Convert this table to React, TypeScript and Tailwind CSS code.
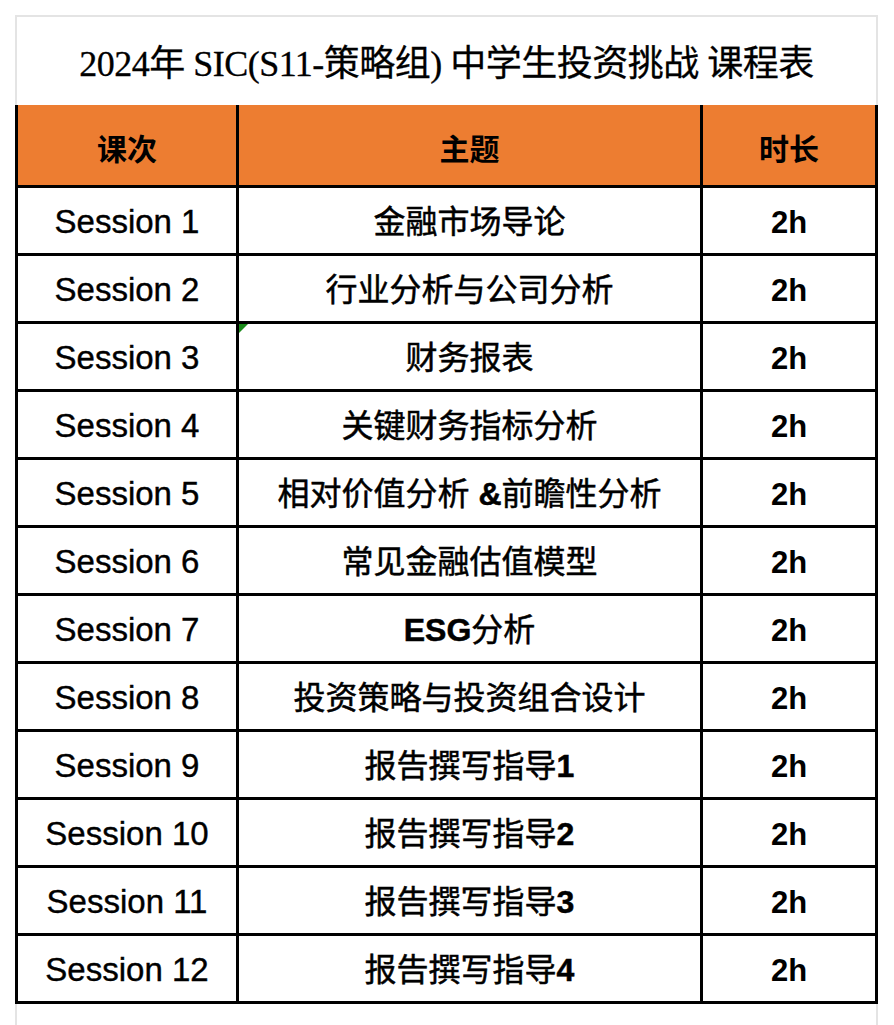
const sessions: { topic: React.ReactNode }[] = [
  { topic: "金融市场导论" },
  { topic: "行业分析与公司分析" },
  { topic: "财务报表" },
  { topic: "关键财务指标分析" },
  {
    topic: (
      <>
        相对价值分析 <b className="font-bold">&amp;</b>前瞻性分析
      </>
    ),
  },
  { topic: "常见金融估值模型" },
  {
    topic: (
      <>
        <b className="font-bold">ESG</b>分析
      </>
    ),
  },
  { topic: "投资策略与投资组合设计" },
  {
    topic: (
      <>
        报告撰写指导<b className="font-bold">1</b>
      </>
    ),
  },
  {
    topic: (
      <>
        报告撰写指导<b className="font-bold">2</b>
      </>
    ),
  },
  {
    topic: (
      <>
        报告撰写指导<b className="font-bold">3</b>
      </>
    ),
  },
  {
    topic: (
      <>
        报告撰写指导<b className="font-bold">4</b>
      </>
    ),
  },
];

const sans = "font-['Liberation_Sans','Noto_Sans_CJK_SC',sans-serif]";

export default function App() {
  return (
    <div className="bg-white w-[894px] h-[1025px] overflow-hidden pt-[15px] pl-[15px]">
      {/* frame */}
      <div className="w-[863px] h-[1010px] border-x-2 border-t-2 border-[#e4e4e4] flex flex-col">
        <div className="h-[88px] pt-[5px] flex items-center justify-center text-[36px] text-black font-['Liberation_Serif','Noto_Sans_CJK_SC',serif] tracking-[-0.5px] [-webkit-text-stroke:0.3px_black]">
          2024年 SIC(S11-策略组) 中学生投资挑战 课程表
        </div>

        {/* table */}
        <div
          className={`-mx-[2px] grid grid-cols-[218px_461px_172px] gap-[3px] bg-black border-x-[3px] border-b-[3px] border-black text-black ${sans}`}
        >
          <div className="h-[80px] pt-[8px] bg-[#ed7d31] flex items-center justify-center text-[30px] font-bold">
            课次
          </div>
          <div className="h-[80px] pt-[8px] bg-[#ed7d31] flex items-center justify-center text-[30px] font-bold">
            主题
          </div>
          <div className="h-[80px] pt-[8px] bg-[#ed7d31] flex items-center justify-center text-[30px] font-bold">
            时长
          </div>

          {sessions.map((s, i) => (
            <div key={i} className="contents">
              <div className="h-[65px] pt-[2px] bg-white flex items-center justify-center text-[33px] [-webkit-text-stroke:0.4px_black]">
                Session {i + 1}
              </div>
              <div className="relative h-[65px] bg-white flex items-center justify-center text-[32px] font-normal">
                {i === 2 && (
                  <span className="absolute left-0 top-0 w-0 h-0 border-t-[9px] border-r-[9px] border-t-[#1a8a1a] border-r-transparent" />
                )}
                <span className="pt-[3px] [-webkit-text-stroke:0.5px_black]">{s.topic}</span>
              </div>
              <div className="h-[65px] pt-[5px] bg-white flex items-center justify-center text-[31px] font-bold">
                2h
              </div>
            </div>
          ))}
        </div>
      </div>
    </div>
  );
}
